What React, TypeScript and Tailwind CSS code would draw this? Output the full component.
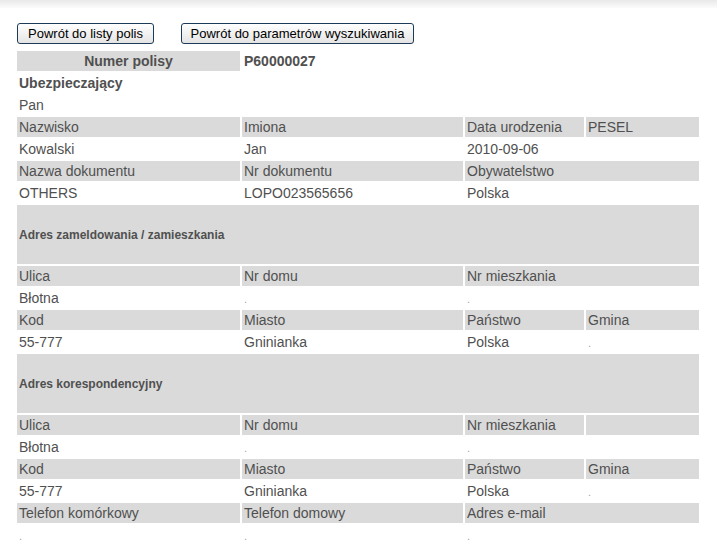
const cellHead = "bg-[#dadada] px-[2px] h-[20px] leading-[20px] align-middle whitespace-nowrap overflow-hidden";
const cellBody = "px-[2px] h-[20px] leading-[20px] align-middle whitespace-nowrap overflow-hidden";

function Dot() {
  return <span className="text-[11px] leading-none text-[#a8a29a]">.</span>;
}

type Cell = { text?: string; dot?: boolean; span?: number };

function HeadRow({ cells }: { cells: Cell[] }) {
  return (
    <tr>
      {cells.map((c, i) => (
        <td key={i} colSpan={c.span ?? 1} className={cellHead}>
          {c.text}
        </td>
      ))}
    </tr>
  );
}

function BodyRow({ cells }: { cells: Cell[] }) {
  return (
    <tr>
      {cells.map((c, i) => (
        <td key={i} colSpan={c.span ?? 1} className={cellBody}>
          {c.dot ? <Dot /> : c.text}
        </td>
      ))}
    </tr>
  );
}

function SectionRow({ title }: { title: string }) {
  return (
    <tr>
      <td colSpan={4} className="bg-[#dadada] h-[59px] px-[2px] align-middle text-[12px] font-bold">
        {title}
      </td>
    </tr>
  );
}

export default function App() {
  return (
    <div className="min-h-[542px] bg-white font-['Liberation_Sans',Arial,sans-serif] text-[14px] text-[#505050]">
      <div className="h-[8px] bg-gradient-to-b from-[#e9e9e9] to-[#fbfbfb]" />
      <div className="flex gap-[27px] pl-[17px] pt-[15px]">
        <button className="h-[21px] w-[137px] rounded-[3px] border border-[#1d3a58] bg-gradient-to-b from-white to-[#e4e4e4] text-[13px] leading-[18px] text-black">
          Powrót do listy polis
        </button>
        <button className="h-[21px] w-[233px] rounded-[3px] border border-[#1d3a58] bg-gradient-to-b from-white to-[#e4e4e4] text-[13px] leading-[18px] text-black">
          Powrót do parametrów wyszukiwania
        </button>
      </div>
      <table className="ml-[15px] mt-[5px] w-[686px] table-fixed border-separate border-spacing-[2px]">
        <colgroup>
          <col className="w-[223px]" />
          <col className="w-[221px]" />
          <col className="w-[119px]" />
          <col className="w-[113px]" />
        </colgroup>
        <tbody>
          <tr>
            <td className={cellHead + " text-center font-bold"}>Numer polisy</td>
            <td className={cellBody + " font-bold"} colSpan={3}>P60000027</td>
          </tr>
          <tr>
            <td className={cellBody + " font-bold"} colSpan={4}>Ubezpieczający</td>
          </tr>
          <BodyRow cells={[{ text: "Pan", span: 4 }]} />
          <HeadRow cells={[{ text: "Nazwisko" }, { text: "Imiona" }, { text: "Data urodzenia" }, { text: "PESEL" }]} />
          <BodyRow cells={[{ text: "Kowalski" }, { text: "Jan" }, { text: "2010-09-06" }, { text: "" }]} />
          <HeadRow cells={[{ text: "Nazwa dokumentu" }, { text: "Nr dokumentu" }, { text: "Obywatelstwo", span: 2 }]} />
          <BodyRow cells={[{ text: "OTHERS" }, { text: "LOPO023565656" }, { text: "Polska", span: 2 }]} />

          <SectionRow title="Adres zameldowania / zamieszkania" />
          <HeadRow cells={[{ text: "Ulica" }, { text: "Nr domu" }, { text: "Nr mieszkania", span: 2 }]} />
          <BodyRow cells={[{ text: "Błotna" }, { dot: true }, { dot: true, span: 2 }]} />
          <HeadRow cells={[{ text: "Kod" }, { text: "Miasto" }, { text: "Państwo" }, { text: "Gmina" }]} />
          <BodyRow cells={[{ text: "55-777" }, { text: "Gninianka" }, { text: "Polska" }, { dot: true }]} />

          <SectionRow title="Adres korespondencyjny" />
          <HeadRow cells={[{ text: "Ulica" }, { text: "Nr domu" }, { text: "Nr mieszkania" }, { text: "" }]} />
          <BodyRow cells={[{ text: "Błotna" }, { dot: true }, { dot: true }, { text: "" }]} />
          <HeadRow cells={[{ text: "Kod" }, { text: "Miasto" }, { text: "Państwo" }, { text: "Gmina" }]} />
          <BodyRow cells={[{ text: "55-777" }, { text: "Gninianka" }, { text: "Polska" }, { dot: true }]} />
          <HeadRow cells={[{ text: "Telefon komórkowy" }, { text: "Telefon domowy" }, { text: "Adres e-mail", span: 2 }]} />
          <BodyRow cells={[{ dot: true }, { dot: true }, { dot: true, span: 2 }]} />
        </tbody>
      </table>
    </div>
  );
}
